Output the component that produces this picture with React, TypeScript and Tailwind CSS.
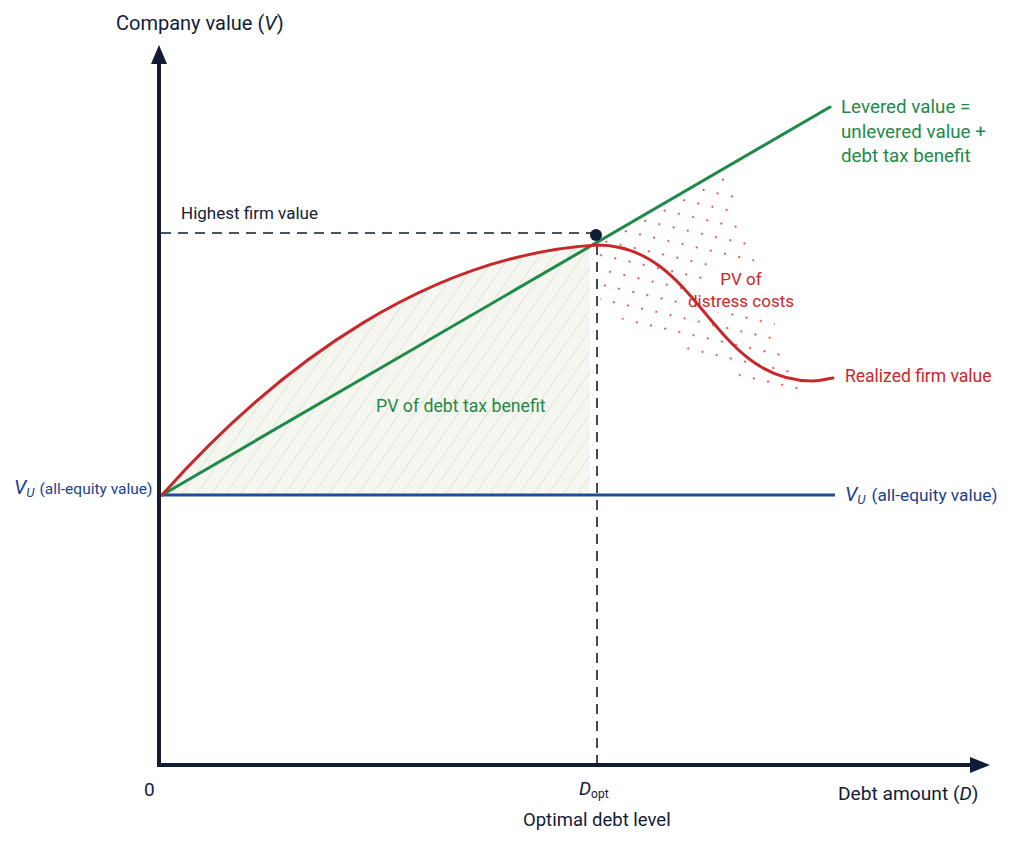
const NAVY = '#111c36';
const GREEN = '#1d8a47';
const RED = '#c8282b';
const BLUE = '#1f4c9b';

function Chart() {
  return (
    <svg className="absolute inset-0" width={1014} height={850} viewBox="0 0 1014 850">
      <defs>
        <pattern id="hatch" width="12" height="12" patternUnits="userSpaceOnUse" patternTransform="rotate(35)">
          <rect width="12" height="12" fill="#f5f6ef" />
          <line x1="0" y1="0" x2="0" y2="12" stroke="#d3e0cb" strokeWidth="1.3" />
        </pattern>
        <pattern id="dots" width="22" height="19" patternUnits="userSpaceOnUse" patternTransform="rotate(-28)">
          <circle cx="4" cy="4" r="1.1" fill="#d8393b" />
          <circle cx="15" cy="13.5" r="1.1" fill="#d8393b" />
        </pattern>
        <clipPath id="fan">
          <polygon points="598,240 728,166 742,226 758,270 775,325 802,394 790,398 745,380 700,354 650,335 620,318 600,304" />
        </clipPath>
        {/* keep the dots clear of the distress costs label */}
        <mask id="textGap">
          <rect x="0" y="0" width="1014" height="850" fill="white" />
          <rect x="712" y="266" width="50" height="22" rx="4" fill="black" />
          <rect x="689" y="288" width="108" height="24" rx="4" fill="black" />
        </mask>
      </defs>

      {/* shaded tax benefit area under realized curve */}
      <path d="M162,495 C282,360 432,255 590,245 L590,495 Z" fill="url(#hatch)" />

      {/* distress costs dots */}
      <g mask="url(#textGap)">
        <rect x="590" y="160" width="220" height="245" fill="url(#dots)" clipPath="url(#fan)" />
      </g>

      {/* dashed guides */}
      <line x1="161" y1="233" x2="596" y2="233" stroke={NAVY} strokeWidth="1.6" strokeDasharray="10 7" />
      <line x1="597" y1="245" x2="597" y2="764" stroke={NAVY} strokeWidth="1.6" strokeDasharray="10 7" />

      {/* all-equity value */}
      <line x1="161" y1="495" x2="835" y2="495" stroke={BLUE} strokeWidth="3" />

      {/* levered value */}
      <line x1="162" y1="495" x2="830" y2="107" stroke={GREEN} strokeWidth="3" strokeLinecap="round" />

      {/* realized firm value */}
      <path
        d="M162,495 C282,360 432,255 597,245 C700,245 710,381 813,381 C820,381 826,379 833,378"
        fill="none"
        stroke={RED}
        strokeWidth="3"
        strokeLinecap="round"
      />

      {/* optimal point */}
      <circle cx="596" cy="235" r="6" fill={NAVY} />

      {/* axes */}
      <line x1="159" y1="60" x2="159" y2="767" stroke={NAVY} strokeWidth="4" />
      <polygon points="159,45 151,64 167,64" fill={NAVY} />
      <line x1="157" y1="765" x2="972" y2="765" stroke={NAVY} strokeWidth="4" />
      <polygon points="990,765 970,757 970,773" fill={NAVY} />
    </svg>
  );
}

function Label({ className, children }: { className: string; children: React.ReactNode }) {
  return <div className={`absolute whitespace-nowrap leading-none ${className}`}>{children}</div>;
}

function EquityValue({ gap }: { gap: string }) {
  return (
    <>
      <i className="text-[20px]">V</i>
      <sub className="text-[13px] italic">U</sub>
      <span className={gap}>(all-equity value)</span>
    </>
  );
}

export default function App() {
  return (
    <div className="relative w-[1014px] h-[850px] bg-white overflow-hidden font-['Roboto',sans-serif]">
      <Chart />

      <Label className="left-[116px] top-[13px] text-[20px] text-[#111c36]">
        Company value (<i>V</i>)
      </Label>

      <Label className="left-[181px] top-[205px] text-[17px] text-[#111c36]">Highest firm value</Label>

      <div className="absolute left-[841px] top-[95px] text-[18.8px] leading-[24.5px] text-[#1d8a47]">
        <div>Levered value =</div>
        <div>unlevered value +</div>
        <div>debt tax benefit</div>
      </div>

      <div className="absolute left-[683px] top-[268px] w-[116px] text-center text-[17px] leading-[22px] text-[#c8282b]">
        <div>PV of</div>
        <div>distress costs</div>
      </div>

      <Label className="left-[376px] top-[398px] text-[17.7px] text-[#1d8a47]">PV of debt tax benefit</Label>

      <Label className="left-[845px] top-[368px] text-[17.5px] text-[#c8282b]">Realized firm value</Label>

      <Label className="left-[14px] top-[477px] text-[15.5px] text-[#1c3f8a]">
        <EquityValue gap="ml-[5px]" />
      </Label>

      <Label className="left-[845px] top-[484px] text-[17.3px] text-[#1c3f8a]">
        <EquityValue gap="ml-[6px]" />
      </Label>

      <Label className="left-[144px] top-[780px] text-[19px] text-[#111c36]">0</Label>

      <Label className="left-[579px] top-[779px] text-[19px] text-[#111c36]">
        <i>D</i>
        <sub className="text-[12px]">opt</sub>
      </Label>

      <Label className="left-[523px] top-[811px] text-[18.5px] text-[#111c36]">Optimal debt level</Label>

      <Label className="left-[838px] top-[784px] text-[19.2px] text-[#111c36]">
        Debt amount (<i>D</i>)
      </Label>
    </div>
  );
}
